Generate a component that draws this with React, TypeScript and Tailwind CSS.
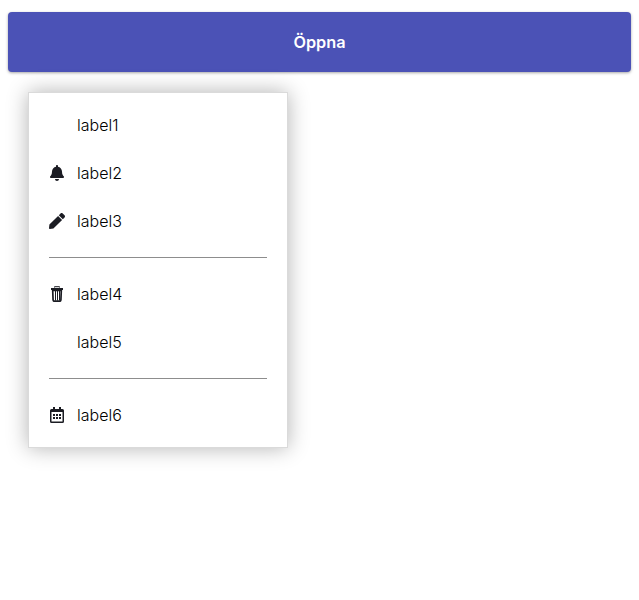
import { FaBell, FaPen } from "react-icons/fa";
import type { ReactNode } from "react";

function TrashIcon() {
  return (
    <svg width="16" height="16" viewBox="0 0 16 16" fill="none" stroke="currentColor">
      <path d="M5.500 1.500v-.8h5v.8" strokeWidth="1" />
      <path d="M2 3h12" strokeWidth="2" />
      <path d="M3.700 4.500l.4 9.500q.1 1.200 1 1.200h5.800q.9 0 1-1.200l.4-9.500z" strokeWidth="1.700" />
      <path d="M6.500 5v9.500M8.500 5v9.500M10.500 5v9.500" strokeWidth="1" />
    </svg>
  );
}

function CalendarIcon() {
  return (
    <svg width="16" height="16" viewBox="0 0 16 16" fill="currentColor">
      <path
        fillRule="evenodd"
        d="M4 0h2v2h4V0h2v2h1.500A1.500 1.500 0 0 1 15 3.500v11a1.500 1.500 0 0 1-1.500 1.500h-11A1.500 1.500 0 0 1 1 14.500v-11A1.500 1.500 0 0 1 2.500 2H4zM2.500 5v9.500h11V5z"
      />
      <path d="M4 7h2v2H4zM7 7h2v2H7zM10 7h2v2h-2zM4 10h2v2H4zM7 10h2v2H7zM10 10h2v2h-2z" />
    </svg>
  );
}

function Item({ icon, label }: { icon?: ReactNode; label: string }) {
  return (
    <li className="flex h-12 items-center">
      <span className="flex w-7 shrink-0 text-[#1b1c23]">{icon}</span>
      <span>{label}</span>
    </li>
  );
}

export default function App() {
  return (
    <main className="min-h-[600px] bg-white px-2 pt-3 font-['Inter','Liberation_Sans',sans-serif] text-base font-light text-black">
      <button className="block h-[60px] w-full rounded bg-[#4b52b6] text-[16.300px] font-semibold text-white shadow-[0_1px_3px_rgba(0,0,0,0.35)]">
        Öppna
      </button>
      <ul className="mt-5 ml-5 h-[356px] w-[260px] border border-[#dadada] bg-white px-5 pt-2 shadow-[0_0_20px_rgba(0,0,0,0.3)]">
        <Item label="label1" />
        <Item icon={<FaBell size={16} />} label="label2" />
        <Item icon={<FaPen size={16} />} label="label3" />
        <li className="my-3 h-px bg-[#8d8d8d]" />
        <Item icon={<TrashIcon />} label="label4" />
        <Item label="label5" />
        <li className="my-3 h-px bg-[#8d8d8d]" />
        <Item icon={<CalendarIcon />} label="label6" />
      </ul>
    </main>
  );
}
